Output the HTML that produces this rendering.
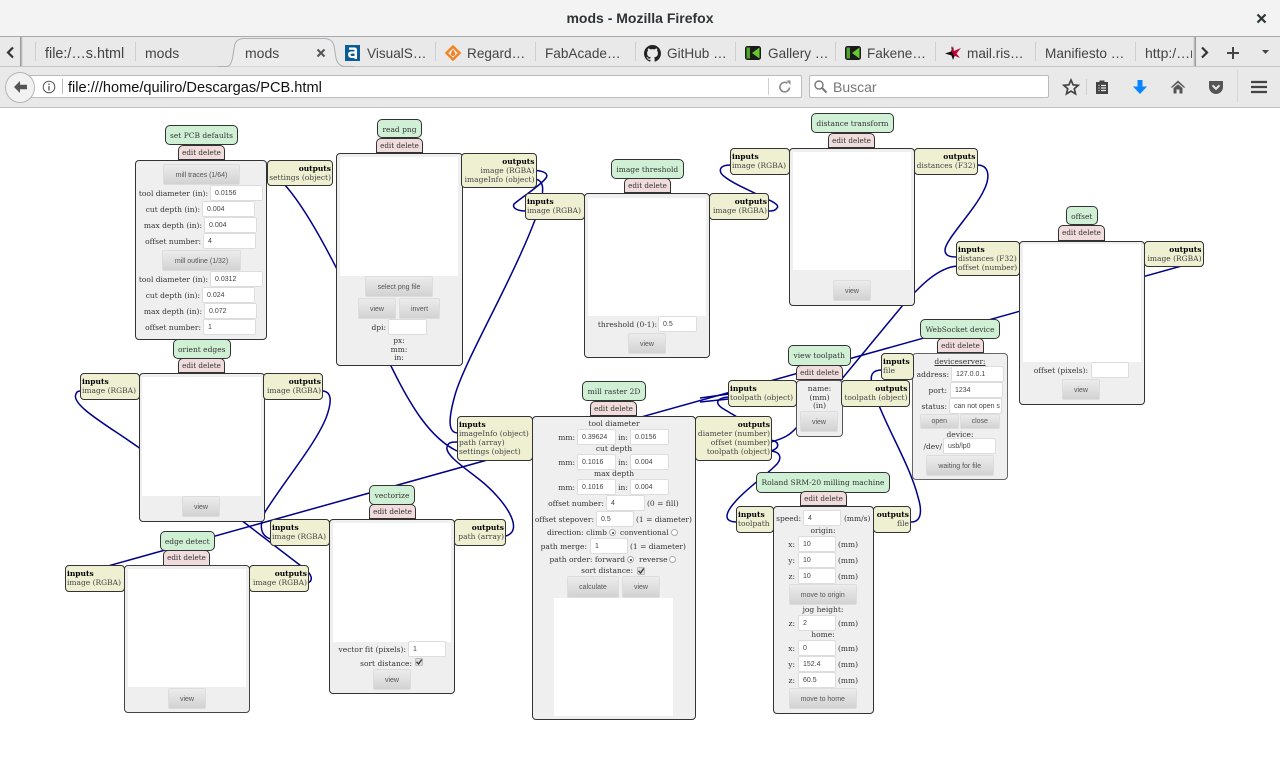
<!DOCTYPE html>
<html lang="es"><head><meta charset="utf-8"><title>mods - Mozilla Firefox</title>
<style>
html,body{margin:0;padding:0;background:#fff;width:1280px;height:773px;overflow:hidden}
div,span{box-sizing:border-box}
#s,#s>*{position:absolute}
#s{left:0;top:0;width:1280px;height:773px;overflow:hidden;font:7.5px/9px "DejaVu Serif","Liberation Serif",serif;color:#333}
.tb{font:14px/20px "Liberation Sans",sans-serif;color:#444;white-space:nowrap}
.sp{width:1px;background:#cfcfcf}
.g,.p,.y,.b{border:1px solid #333;text-align:center;white-space:nowrap}
.g{background:#d0f0d5;border-radius:5px;line-height:19px}
.p{background:#f0dcdc;border-radius:5px 5px 0 0;line-height:13px;font-size:7.2px}
.y{background:#efefd2;border-radius:4px;padding:3px 1px 0;text-align:left;color:#444}
.y b{color:#000}
.o{text-align:right}
.b{background:#efefef;border-radius:4px;border-color:#333}
.w{background:#fff}
.i{background:#fff;border:1px solid #ddd;border-radius:2px;font:7px/16px "Liberation Sans",sans-serif;color:#444;padding-left:4px;white-space:nowrap;overflow:hidden;height:16px}
.u{background:linear-gradient(#ececec,#d2d2d2);border:1px solid #ddd;border-radius:2px;font:7px/21px "Liberation Sans",sans-serif;color:#555;text-align:center;white-space:nowrap}
.l,.r,.c{height:16px;line-height:18px;white-space:nowrap}
.l{left:0;text-align:right}
.c{text-align:center}
.ra{width:7px;height:7px;border-radius:50%;border:1px solid #aaa;background:#fff}
.on:after{content:"";position:absolute;left:1.5px;top:1.5px;width:2px;height:2px;border-radius:50%;background:#333}
</style></head><body>
<div id="s">
<!-- browser chrome -->
<div style="left:0;top:0;width:1280px;height:36px;background:#f3f3f3"></div>
<div style="left:0;top:36px;width:1280px;height:1px;background:#aaa"></div>
<div style="left:0;top:37px;width:1280px;height:70px;background:#e9e9e9"></div>
<div style="left:0;top:66px;width:1280px;height:1px;background:#c4c4c4"></div>
<div style="left:0;top:107px;width:1280px;height:1px;background:#c0c0c0"></div>
<div class="tb" style="left:0;width:1280px;top:8px;text-align:center;font-weight:bold;color:#2e3436">mods - Mozilla Firefox</div>
<svg style="left:1256px;top:13px" width="11" height="11" viewBox="0 0 11 11"><path d="M1.5 1.5 9.5 9.5M9.5 1.5 1.5 9.5" stroke="#2e3436" stroke-width="2.2"/></svg>
<!-- tabs -->
<svg style="left:6px;top:46px" width="9" height="13" viewBox="0 0 9 13"><path d="M7 1.5 2 6.5 7 11.5" fill="none" stroke="#333" stroke-width="2.2"/></svg>
<div style="left:20px;top:37px;width:3px;height:29px;background:linear-gradient(90deg,#8b8b8b,#e9e9e9)"></div>
<div class="sp" style="left:35px;top:42px;height:19px"></div>
<div class="tb" style="left:45px;top:44px;font-size:14.4px">file:/…s.html</div>
<div class="sp" style="left:135px;top:42px;height:19px"></div>
<div class="tb" style="left:145px;top:43px">mods</div>
<svg style="left:218px;top:37px" width="136" height="31" viewBox="0 0 136 31"><path d="M0 29.500H8C12 29.500 13.500 26 14.500 21L16.500 9C17.500 4 20.500 1.500 26 1.500H106C112 1.500 115 4 116 9L118 21C119 26 122 29.500 128 29.500H136" fill="#ececec" stroke="#a9b0b6" stroke-width="1"/></svg>
<div class="tb" style="left:245px;top:43px">mods</div>
<svg style="left:316px;top:48px" width="10" height="10" viewBox="0 0 10 10"><path d="M1.500 1.500 8.500 8.500M8.500 1.500 1.500 8.500" stroke="#555" stroke-width="2"/></svg>
<svg style="left:345px;top:45px" width="15" height="16" viewBox="0 0 15 16"><rect width="15" height="16" fill="#0b5d95"/><path d="M4 2.500H9.500C11 2.500 12 3.500 12 5V14H9.500V13H7C4.500 13 3 11.500 3 9.500 3 7.500 4.500 6.500 7 6.500H9.500V5.500C9.500 5 9 4.800 8.500 4.800H4ZM9.500 8.500H7.500C6 8.500 5.500 9 5.500 9.700S6 11 7.500 11H9.500Z" fill="#fff"/></svg>
<div class="tb" style="left:367px;top:44px;font-size:13.600px">VisualS…</div>
<div class="sp" style="left:435px;top:42px;height:19px"></div>
<svg style="left:445px;top:45px" width="16" height="16" viewBox="0 0 16 16"><path d="M8 1.500 14.500 8 8 14.500 1.500 8Z" fill="none" stroke="#f58220" stroke-width="2.400"/><path d="M8 4C8.500 6 10.500 7.500 10 9.500 9.500 11.500 6.500 11.500 6 9.500 5.700 7.500 7.500 6 8 4Z" fill="#f58220"/></svg>
<div class="tb" style="left:467px;top:44px;font-size:13.600px">Regard…</div>
<div class="sp" style="left:535px;top:42px;height:19px"></div>
<div class="tb" style="left:545px;top:44px;font-size:13.600px">FabAcade…</div>
<div class="sp" style="left:635px;top:42px;height:19px"></div>
<svg style="left:644px;top:45px" width="17" height="17" viewBox="0 0 16 16"><path d="M8 0C3.580 0 0 3.580 0 8c0 3.540 2.290 6.530 5.470 7.590.4.070.55-.17.55-.38v-1.340c-2.230.48-2.700-1.070-2.700-1.070-.36-.92-.89-1.170-.89-1.170-.73-.5.050-.49.050-.49.800.060 1.230.82 1.230.82.710 1.220 1.870.870 2.330.660.070-.520.280-.870.510-1.070-1.780-.2-3.640-.89-3.640-3.950 0-.870.310-1.590.820-2.150-.080-.2-.360-1.020.080-2.120 0 0 .670-.210 2.200.82a7.600 7.600 0 0 1 4 0c1.530-1.040 2.200-.820 2.200-.820.440 1.100.160 1.920.080 2.120.510.560.820 1.270.820 2.150 0 3.070-1.870 3.750-3.650 3.950.290.250.540.730.540 1.480v2.200c0 .210.150.460.550.380A8 8 0 0 0 16 8c0-4.420-3.580-8-8-8z" fill="#222"/></svg>
<div class="tb" style="left:667px;top:44px;font-size:13.600px">GitHub …</div>
<div class="sp" style="left:735px;top:42px;height:19px"></div>
<svg style="left:745px;top:45px" width="16" height="16" viewBox="0 0 16 16"><rect y="1" width="16" height="14" rx="2.500" fill="#1a1a1a"/><path d="M1.500 2.500H5V13.500H1.500Z" fill="#4fa52c"/><path d="M7 8 14.500 2.500V13.500Z" fill="#66c933"/></svg>
<div class="tb" style="left:768px;top:44px;font-size:13.600px">Gallery …</div>
<div class="sp" style="left:835px;top:42px;height:19px"></div>
<svg style="left:845px;top:45px" width="16" height="16" viewBox="0 0 16 16"><rect y="1" width="16" height="14" rx="2.500" fill="#1a1a1a"/><path d="M1.500 2.500H5V13.500H1.500Z" fill="#4fa52c"/><path d="M7 8 14.500 2.500V13.500Z" fill="#66c933"/></svg>
<div class="tb" style="left:867px;top:44px;font-size:13.600px">Fakene…</div>
<div class="sp" style="left:935px;top:42px;height:19px"></div>
<svg style="left:945px;top:45px" width="16" height="16" viewBox="0 0 16 16"><path d="M0 8.500 6 6.500 8 1 9 7 10 10 8 15 6.500 10.500Z" fill="#111"/><path d="M6 1 9 6 16 3 11.500 8.500 15 13 9 10.500 7 7Z" fill="#c8002f"/></svg>
<div class="tb" style="left:967px;top:44px;font-size:13.600px">mail.ris…</div>
<div class="sp" style="left:1035px;top:42px;height:19px"></div>
<div class="tb" style="left:1045px;top:44px;font-size:13.600px">Manifiesto …</div>
<div class="sp" style="left:1135px;top:42px;height:19px"></div>
<div class="tb" style="left:1145px;top:43px;width:47px;overflow:hidden">http:/…ma</div>
<div style="left:1193px;top:37px;width:3px;height:29px;background:linear-gradient(270deg,#8b8b8b,#e9e9e9)"></div>
<svg style="left:1200px;top:46px" width="9" height="13" viewBox="0 0 9 13"><path d="M2 1.500 7 6.500 2 11.500" fill="none" stroke="#333" stroke-width="2.200"/></svg>
<svg style="left:1226px;top:46px" width="14" height="14" viewBox="0 0 14 14"><path d="M7 1V13M1 7H13" stroke="#444" stroke-width="2"/></svg>
<svg style="left:1261px;top:49px" width="9" height="6" viewBox="0 0 9 6"><path d="M1 1H8L4.500 5Z" fill="#444"/></svg>
<!-- url bar -->
<div style="left:22px;top:75px;width:780px;height:23px;background:#fff;border:1px solid #bcbcbc;border-radius:2px"></div>
<div style="left:5px;top:72px;width:30px;height:31px;border-radius:50%;background:#f2f2f2;border:1px solid #b5b5b5"></div>
<svg style="left:12px;top:79px" width="16" height="16" viewBox="0 0 16 16"><path d="M8 2 2 8 8 14V10.300H15V5.700H8Z" fill="#555"/></svg>
<svg style="left:42px;top:80px" width="14" height="14" viewBox="0 0 14 14"><circle cx="7" cy="7" r="5.800" fill="none" stroke="#555" stroke-width="1"/><path d="M7 6V10.500M7 3.500V5" stroke="#555" stroke-width="1.300"/></svg>
<div class="sp" style="left:62px;top:79px;height:15px;background:#bbb"></div>
<div class="tb" style="left:68px;top:78px;color:#111;font-size:14.600px">file:///home/quiliro/Descargas/PCB.html</div>
<div class="sp" style="left:768px;top:78px;height:17px"></div>
<svg style="left:778px;top:80px" width="14" height="14" viewBox="0 0 14 14"><path d="M11.500 7.500A4.800 4.800 0 1 1 9.500 3.200" fill="none" stroke="#888" stroke-width="1.600"/><path d="M8.500 0.500 12.500 0.500 12.500 5Z" fill="#888"/></svg>
<div style="left:809px;top:75px;width:240px;height:23px;background:#fff;border:1px solid #bcbcbc;border-radius:2px"></div>
<svg style="left:813px;top:79px" width="15" height="15" viewBox="0 0 15 15"><circle cx="6" cy="6" r="4" fill="none" stroke="#777" stroke-width="1.400"/><path d="M9 9 13.500 13.500" stroke="#777" stroke-width="2"/></svg>
<div class="tb" style="left:833px;top:77px;color:#777">Buscar</div>
<svg style="left:1062px;top:78px" width="18" height="18" viewBox="0 0 18 18"><path d="M9 2 11.100 6.800 16.200 7.300 12.300 10.700 13.500 15.800 9 13.100 4.500 15.800 5.700 10.700 1.800 7.300 6.900 6.800Z" fill="none" stroke="#444" stroke-width="1.700"/></svg>
<div class="sp" style="left:1086px;top:79px;height:16px"></div>
<svg style="left:1094px;top:79px" width="16" height="16" viewBox="0 0 16 16"><path d="M2 3H5.500V1.500H10.500V3H14V15H2Z" fill="#444"/><path d="M4.500 6.500H5.500M7 6.500H12M4.500 9H5.500M7 9H12M4.500 11.500H5.500M7 11.500H12" stroke="#e9e9e9" stroke-width="1.200"/></svg>
<svg style="left:1132px;top:79px" width="16" height="16" viewBox="0 0 16 16"><path d="M5.500 1H10.500V7.500H15L8 15 1 7.500H5.500Z" fill="#0a84ff"/></svg>
<svg style="left:1170px;top:79px" width="16" height="16" viewBox="0 0 16 16"><path d="M8 1.500 15.500 8.500H13.500L8 3.800 2.500 8.500H.5Z" fill="#555"/><path d="M3.500 9 8 5.300 12.500 9V14.500H9.500V10.500H6.500V14.500H3.500Z" fill="#555"/></svg>
<svg style="left:1208px;top:79px" width="16" height="16" viewBox="0 0 16 16"><path d="M1 2H15V8C15 12 11.500 15 8 15S1 12 1 8Z" fill="#555"/><path d="M4.500 6.300 8 9.800 11.500 6.300" fill="none" stroke="#e9e9e9" stroke-width="2"/></svg>
<div class="sp" style="left:1237px;top:70px;height:32px;background:#d6d6d6"></div>
<svg style="left:1251px;top:80px" width="16" height="14" viewBox="0 0 16 14"><path d="M0 2H16M0 7H16M0 12H16" stroke="#444" stroke-width="2.300"/></svg>

<!-- wires -->
<svg style="left:0;top:0" width="1280" height="773" viewBox="0 0 1280 773" fill="none" stroke="#00008b" stroke-width="1.500">
<path d="M1203 260 65 578"/>
<path d="M284 184C304 206 325 245 345 285L391 366C410 405 430 438 457 451"/>
<path d="M506 536C525 530 505 500 480 480C465 468 445 455 447 447C448 442 452 442 458 442"/>
<path d="M536 179C545 182 543 190 541 205L535 220C510 285 465 360 455 395C448 420 448 433 458 433"/>
<path d="M536 170.500C544 171 549 174 546 178C540 186 522 197 514 204C512 208 517 211 526 211"/>
<path d="M731 165C718 165 718 172 725 177C735 185 750 190 762 197C772 201 780 205 777 208C775 211 772 211 769 211"/>
<path d="M977 165C990 165 990 178 984 190C975 210 945 240 945 250C945 256 950 257 957 257"/>
<path d="M771 442C785 438 790 435 797 427L841 380L903 305C915 292 935 268 957 266"/>
<path d="M308 583C314 580 311 574 305 569L245 523L138 447C110 427 70 405 76 394C77 391 79 391 81 391"/>
<path d="M323 391C332 392 332 402 326 418C315 445 285 480 265 512C259 525 260 536 271 539"/>
<path d="M729 397C716 398 715 403 722 408L737 417L760 440C768 446 770 450 771 451"/>
<path d="M729 394 700 398M729 399 700 402"/>
<path d="M771 451C782 452 782 460 775 466C765 476 745 490 735 502C726 512 722 522 737 522"/>
<path d="M771 440C780 442 780 448 771 451"/>
<path d="M911 522C922 522 922 510 918 497C910 465 885 425 875 395C870 380 868 370 882 370"/>
</svg>

<!-- set PCB defaults -->
<div class="g" style="left:165px;top:125px;width:73px;height:20px">set PCB defaults</div>
<div class="p" style="left:178px;top:145px;width:47px;height:15px">edit delete</div>
<div class="b" style="left:135px;top:160px;width:132px;height:180px"></div>
<div class="y o" style="left:267px;top:160px;width:66px;height:26px"><b>outputs</b><br>settings (object)</div>
<div class="u" style="left:163px;top:164px;width:77px;height:21px">mill traces (1/64)</div>
<div class="l" style="top:185px;width:208px">tool diameter (in):</div><div class="i" style="left:210px;top:185px;width:53px">0.0156</div>
<div class="l" style="top:201px;width:200px">cut depth (in):</div><div class="i" style="left:202px;top:201px;width:53px">0.004</div>
<div class="l" style="top:217px;width:202px">max depth (in):</div><div class="i" style="left:204px;top:217px;width:53px">0.004</div>
<div class="l" style="top:233px;width:201px">offset number:</div><div class="i" style="left:203px;top:233px;width:53px">4</div>
<div class="u" style="left:162px;top:250px;width:79px;height:21px">mill outline (1/32)</div>
<div class="l" style="top:271px;width:208px">tool diameter (in):</div><div class="i" style="left:210px;top:271px;width:53px">0.0312</div>
<div class="l" style="top:287px;width:200px">cut depth (in):</div><div class="i" style="left:202px;top:287px;width:53px">0.024</div>
<div class="l" style="top:303px;width:202px">max depth (in):</div><div class="i" style="left:204px;top:303px;width:53px">0.072</div>
<div class="l" style="top:319px;width:201px">offset number:</div><div class="i" style="left:203px;top:319px;width:53px">1</div>

<!-- read png -->
<div class="g" style="left:377px;top:119px;width:45px;height:19px">read png</div>
<div class="p" style="left:376px;top:138px;width:47px;height:15px">edit delete</div>
<div class="b" style="left:336px;top:153px;width:126.500px;height:213px"></div>
<div class="w" style="left:340px;top:157px;width:118px;height:119px"></div>
<div class="y o" style="left:461px;top:153px;width:75.500px;height:35px"><b>outputs</b><br>image (RGBA)<br>imageInfo (object)</div>
<div class="u" style="left:365px;top:276px;width:68px;height:20.500px">select png file</div>
<div class="u" style="left:358px;top:298px;width:38px;height:21px">view</div>
<div class="u" style="left:399px;top:298px;width:41px;height:21px">invert</div>
<div class="l" style="top:319px;width:386px">dpi:</div><div class="i" style="left:388px;top:319px;width:38.500px"></div>
<div class="c" style="left:336px;width:126px;top:332px">px:</div>
<div class="c" style="left:336px;width:126px;top:341px">mm:</div>
<div class="c" style="left:336px;width:126px;top:349px">in:</div>

<!-- image threshold -->
<div class="g" style="left:611px;top:159px;width:72.500px;height:20px">image threshold</div>
<div class="p" style="left:624px;top:178px;width:47px;height:15px">edit delete</div>
<div class="b" style="left:584px;top:193px;width:126px;height:164.500px"></div>
<div class="w" style="left:588px;top:198px;width:118px;height:118px"></div>
<div class="y" style="left:525px;top:193px;width:60px;height:27px"><b>inputs</b><br>image (RGBA)</div>
<div class="y o" style="left:709px;top:193px;width:60px;height:27px"><b>outputs</b><br>image (RGBA)</div>
<div class="l" style="top:316px;width:657px">threshold (0-1):</div><div class="i" style="left:658px;top:316px;width:38.500px">0.5</div>
<div class="u" style="left:628px;top:333px;width:38px;height:20.500px">view</div>

<!-- distance transform -->
<div class="g" style="left:811px;top:113px;width:83px;height:20px">distance transform</div>
<div class="p" style="left:828px;top:133px;width:47px;height:15px">edit delete</div>
<div class="b" style="left:789px;top:148px;width:126px;height:157.500px"></div>
<div class="w" style="left:793px;top:152px;width:118px;height:118px"></div>
<div class="y" style="left:730px;top:148px;width:60px;height:26.500px"><b>inputs</b><br>image (RGBA)</div>
<div class="y o" style="left:914px;top:148px;width:63.500px;height:26.500px"><b>outputs</b><br>distances (F32)</div>
<div class="u" style="left:833px;top:280px;width:38px;height:20.500px">view</div>

<!-- offset -->
<div class="g" style="left:1066px;top:206px;width:31.500px;height:19px">offset</div>
<div class="p" style="left:1058px;top:225px;width:47px;height:16px">edit delete</div>
<div class="b" style="left:1019px;top:241px;width:125.500px;height:163.500px"></div>
<div class="w" style="left:1023px;top:244px;width:118px;height:118px"></div>
<div class="y" style="left:956px;top:241px;width:64px;height:34.500px"><b>inputs</b><br>distances (F32)<br>offset (number)</div>
<div class="y o" style="left:1144px;top:241px;width:59.500px;height:25.500px"><b>outputs</b><br>image (RGBA)</div>
<div class="l" style="top:362px;width:1088px">offset (pixels):</div><div class="i" style="left:1091px;top:362px;width:38px"></div>
<div class="u" style="left:1062px;top:379px;width:38px;height:20.500px">view</div>

<!-- WebSocket device -->
<div class="g" style="left:920px;top:319px;width:80px;height:20px">WebSocket device</div>
<div class="p" style="left:937px;top:338px;width:47px;height:15px">edit delete</div>
<div class="b" style="left:912px;top:353px;width:96px;height:127px;border-color:#666;border-width:1.500px"></div>
<div class="y" style="left:881px;top:353px;width:32.500px;height:26.500px"><b>inputs</b><br>file</div>
<div class="c" style="left:912px;width:96px;top:353px;text-decoration:underline">deviceserver:</div>
<div class="l" style="top:366px;width:949px">address:</div><div class="i" style="left:951px;top:366px;width:53px">127.0.0.1</div>
<div class="l" style="top:382px;width:947px">port:</div><div class="i" style="left:950px;top:382px;width:53px">1234</div>
<div class="l" style="top:398px;width:947px">status:</div><div class="i" style="left:949px;top:398px;width:53px;padding-right:2px">can not open s</div>
<div class="u" style="left:920px;top:414px;width:38.500px;height:14.500px;line-height:14px">open</div>
<div class="u" style="left:960px;top:414px;width:39.500px;height:14.500px;line-height:14px">close</div>
<div class="c" style="left:912px;width:96px;top:426px">device:</div>
<div class="l" style="top:438px;width:942px">/dev/</div><div class="i" style="left:943px;top:438px;width:53px">usb/lp0</div>
<div class="u" style="left:926px;top:455px;width:67.500px;height:20.500px">waiting for file</div>

<!-- view toolpath -->
<div class="g" style="left:788px;top:345px;width:62.500px;height:20.500px">view toolpath</div>
<div class="p" style="left:796px;top:365px;width:47px;height:15px">edit delete</div>
<div class="b" style="left:796px;top:380px;width:47px;height:57px;border-color:#555;border-width:1.300px"></div>
<div class="y" style="left:728px;top:380px;width:68.500px;height:26.500px"><b>inputs</b><br>toolpath (object)</div>
<div class="y o" style="left:841px;top:380px;width:68.500px;height:26.500px"><b>outputs</b><br>toolpath (object)</div>
<div class="c" style="left:796px;width:47px;top:380px">name:</div>
<div class="c" style="left:796px;width:47px;top:389px">(mm)</div>
<div class="c" style="left:796px;width:47px;top:397px">(in)</div>
<div class="u" style="left:800px;top:411px;width:38px;height:21px">view</div>

<!-- mill raster 2D -->
<div class="g" style="left:582px;top:381px;width:64px;height:20px">mill raster 2D</div>
<div class="p" style="left:590px;top:401px;width:47px;height:15px">edit delete</div>
<div class="b" style="left:532px;top:416px;width:164px;height:304px"></div>
<div class="y" style="left:457px;top:416px;width:75.500px;height:44.500px"><b>inputs</b><br>imageInfo (object)<br>path (array)<br>settings (object)</div>
<div class="y o" style="left:695px;top:416px;width:77px;height:44.500px"><b>outputs</b><br>diameter (number)<br>offset (number)<br>toolpath (object)</div>
<div class="c" style="left:532px;width:164px;top:415px">tool diameter</div>
<div class="l" style="top:429px;width:575px">mm:</div><div class="i" style="left:577px;top:429px;width:38.500px">0.39624</div>
<div class="c" style="left:616px;width:14px;top:429px">in:</div><div class="i" style="left:630px;top:429px;width:38.500px">0.0156</div>
<div class="c" style="left:532px;width:164px;top:440px">cut depth</div>
<div class="l" style="top:454px;width:575px">mm:</div><div class="i" style="left:577px;top:454px;width:38.500px">0.1016</div>
<div class="c" style="left:616px;width:14px;top:454px">in:</div><div class="i" style="left:630px;top:454px;width:38.500px">0.004</div>
<div class="c" style="left:532px;width:164px;top:465px">max depth</div>
<div class="l" style="top:479px;width:575px">mm:</div><div class="i" style="left:577px;top:479px;width:38.500px">0.1016</div>
<div class="c" style="left:616px;width:14px;top:479px">in:</div><div class="i" style="left:630px;top:479px;width:38.500px">0.004</div>
<div class="l" style="top:495px;width:604px">offset number:</div><div class="i" style="left:606px;top:495px;width:38.500px">4</div><div class="r" style="left:647px;top:495px">(0 = fill)</div>
<div class="l" style="top:511px;width:594px">offset stepover:</div><div class="i" style="left:596px;top:511px;width:38px">0.5</div><div class="r" style="left:636px;top:511px">(1 = diameter)</div>
<div class="l" style="top:524px;width:607px">direction: climb</div><div class="ra on" style="left:609px;top:529px"></div><div class="r" style="left:620px;top:524px">conventional</div><div class="ra" style="left:671px;top:529px"></div>
<div class="l" style="top:538px;width:587px">path merge:</div><div class="i" style="left:590px;top:538px;width:38px">1</div><div class="r" style="left:630px;top:538px">(1 = diameter)</div>
<div class="l" style="top:551px;width:625px">path order: forward</div><div class="ra on" style="left:627px;top:556px"></div><div class="r" style="left:639px;top:551px">reverse</div><div class="ra" style="left:669px;top:556px"></div>
<div class="l" style="top:562px;width:633px">sort distance:</div>
<svg style="left:637px;top:567px" width="8" height="8" viewBox="0 0 8 8"><rect x=".5" y=".5" width="7" height="7" rx="1" fill="#ddd" stroke="#bbb"/><path d="M1.500 3.800 3.500 6 6.800 1.500" fill="none" stroke="#333" stroke-width="1.300"/></svg>
<div class="u" style="left:567px;top:576px;width:52px;height:21.500px">calculate</div>
<div class="u" style="left:622px;top:576px;width:38px;height:21.500px">view</div>
<div class="w" style="left:554px;top:598px;width:119px;height:118px"></div>

<!-- Roland -->
<div class="g" style="left:756px;top:472px;width:134px;height:20.500px">Roland SRM-20 milling machine</div>
<div class="p" style="left:800px;top:491px;width:47px;height:15px">edit delete</div>
<div class="b" style="left:773px;top:506px;width:101px;height:207.500px"></div>
<div class="y" style="left:736px;top:506px;width:38px;height:26.500px"><b>inputs</b><br>toolpath</div>
<div class="y o" style="left:873px;top:506px;width:38px;height:26.500px"><b>outputs</b><br>file</div>
<div class="l" style="top:510px;width:801px">speed:</div><div class="i" style="left:803px;top:510px;width:38px">4</div><div class="r" style="left:844px;top:510px">(mm/s)</div>
<div class="c" style="left:773px;width:100px;top:522px">origin:</div>
<div class="l" style="top:536px;width:795px">x:</div><div class="i" style="left:798px;top:536px;width:38px">10</div><div class="r" style="left:838px;top:536px">(mm)</div>
<div class="l" style="top:552px;width:795px">y:</div><div class="i" style="left:798px;top:552px;width:38px">10</div><div class="r" style="left:838px;top:552px">(mm)</div>
<div class="l" style="top:568px;width:795px">z:</div><div class="i" style="left:798px;top:568px;width:38px">10</div><div class="r" style="left:838px;top:568px">(mm)</div>
<div class="u" style="left:789px;top:584px;width:67.500px;height:20.500px">move to origin</div>
<div class="c" style="left:773px;width:100px;top:601px">jog height:</div>
<div class="l" style="top:615px;width:795px">z:</div><div class="i" style="left:798px;top:615px;width:38px">2</div><div class="r" style="left:838px;top:615px">(mm)</div>
<div class="c" style="left:773px;width:100px;top:626px">home:</div>
<div class="l" style="top:640px;width:795px">x:</div><div class="i" style="left:798px;top:640px;width:38px">0</div><div class="r" style="left:838px;top:640px">(mm)</div>
<div class="l" style="top:656px;width:795px">y:</div><div class="i" style="left:798px;top:656px;width:38px">152.4</div><div class="r" style="left:838px;top:656px">(mm)</div>
<div class="l" style="top:672px;width:795px">z:</div><div class="i" style="left:798px;top:672px;width:38px">60.5</div><div class="r" style="left:838px;top:672px">(mm)</div>
<div class="u" style="left:789px;top:688px;width:67.500px;height:20.500px">move to home</div>

<!-- orient edges -->
<div class="g" style="left:173px;top:339px;width:57.500px;height:20px">orient edges</div>
<div class="p" style="left:178px;top:358px;width:47px;height:15px">edit delete</div>
<div class="b" style="left:138.500px;top:373px;width:126px;height:148.500px"></div>
<div class="w" style="left:142px;top:377px;width:119px;height:119px"></div>
<div class="y" style="left:80px;top:373px;width:60px;height:27px"><b>inputs</b><br>image (RGBA)</div>
<div class="y o" style="left:263px;top:373px;width:60px;height:27px"><b>outputs</b><br>image (RGBA)</div>
<div class="u" style="left:182px;top:496px;width:38px;height:20.500px">view</div>

<!-- vectorize -->
<div class="g" style="left:369px;top:485px;width:46px;height:20px">vectorize</div>
<div class="p" style="left:369px;top:504px;width:47px;height:15px">edit delete</div>
<div class="b" style="left:329px;top:519px;width:126px;height:175px"></div>
<div class="w" style="left:333px;top:523px;width:118px;height:119px"></div>
<div class="y" style="left:270px;top:519px;width:60px;height:26.500px"><b>inputs</b><br>image (RGBA)</div>
<div class="y o" style="left:454px;top:519px;width:52px;height:26.500px"><b>outputs</b><br>path (array)</div>
<div class="l" style="top:641px;width:406px">vector fit (pixels):</div><div class="i" style="left:408px;top:641px;width:38px">1</div>
<div class="l" style="top:655px;width:412px">sort distance:</div>
<svg style="left:415px;top:658px" width="8" height="8" viewBox="0 0 8 8"><rect x=".5" y=".5" width="7" height="7" rx="1" fill="#ddd" stroke="#bbb"/><path d="M1.500 3.800 3.500 6 6.800 1.500" fill="none" stroke="#333" stroke-width="1.300"/></svg>
<div class="u" style="left:373px;top:669px;width:38px;height:20.500px">view</div>

<!-- edge detect -->
<div class="g" style="left:160px;top:531px;width:54.500px;height:19.500px">edge detect</div>
<div class="p" style="left:163px;top:550px;width:47px;height:15.500px">edit delete</div>
<div class="b" style="left:124px;top:565px;width:126px;height:148px;border-color:#444;border-width:1.300px"></div>
<div class="w" style="left:128px;top:569px;width:118px;height:118px"></div>
<div class="y" style="left:65px;top:565px;width:60px;height:26.500px"><b>inputs</b><br>image (RGBA)</div>
<div class="y o" style="left:249px;top:565px;width:60px;height:26.500px"><b>outputs</b><br>image (RGBA)</div>
<div class="u" style="left:168px;top:688px;width:38px;height:21px">view</div>
</div>
</body></html>
